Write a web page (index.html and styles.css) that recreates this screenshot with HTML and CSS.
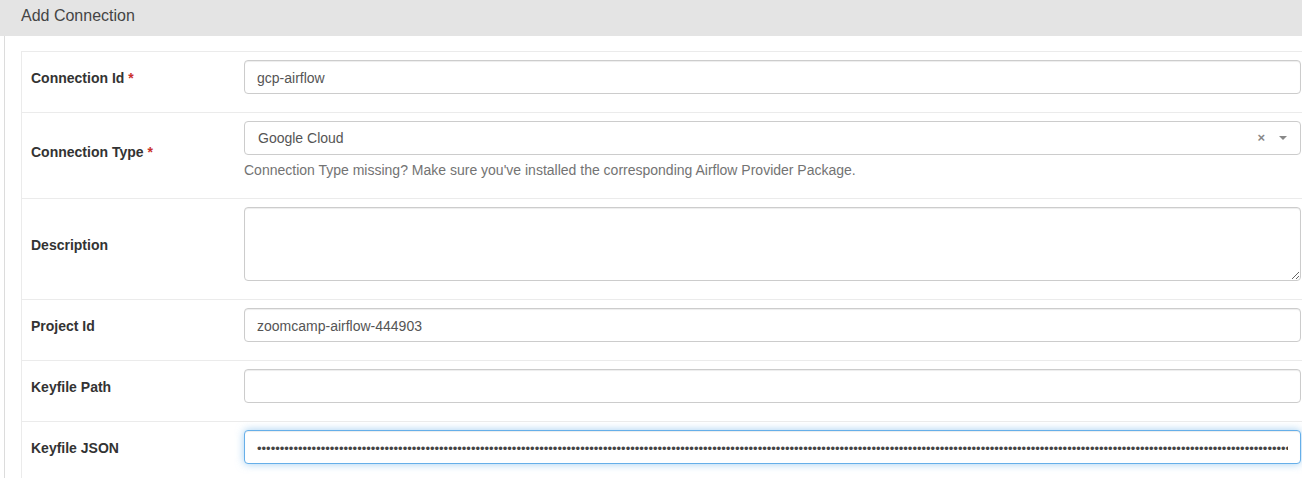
FILE: index.html
```html
<!DOCTYPE html>
<html>
<head>
<meta charset="utf-8">
<title>Add Connection</title>
<link rel="stylesheet" href="styles.css">
</head>
<body>
<div class="page">
  <div class="panel-heading">Add Connection</div>
  <div class="panel-body">
    <table class="form-table">
      <tr class="row-basic">
        <td class="label-cell"><label class="field-label">Connection Id <span class="req">*</span></label></td>
        <td class="field-cell"><input class="form-control" type="text" value="gcp-airflow"></td>
      </tr>
      <tr>
        <td class="label-cell"><label class="field-label">Connection Type <span class="req">*</span></label></td>
        <td class="field-cell">
          <div class="select2">
            <span class="select2-text">Google Cloud</span>
            <span class="select2-clear">×</span>
            <span class="select2-arrow"></span>
          </div>
          <p class="help-block">Connection Type missing? Make sure you've installed the corresponding Airflow Provider Package.</p>
        </td>
      </tr>
      <tr>
        <td class="label-cell"><label class="field-label">Description</label></td>
        <td class="field-cell"><textarea class="form-control textarea"></textarea></td>
      </tr>
      <tr>
        <td class="label-cell"><label class="field-label">Project Id</label></td>
        <td class="field-cell"><input class="form-control" type="text" value="zoomcamp-airflow-444903"></td>
      </tr>
      <tr>
        <td class="label-cell"><label class="field-label">Keyfile Path</label></td>
        <td class="field-cell"><input class="form-control" type="text" value=""></td>
      </tr>
      <tr>
        <td class="label-cell"><label class="field-label">Keyfile JSON</label></td>
        <td class="field-cell"><input class="form-control focused" type="password" value="xxxxxxxxxxxxxxxxxxxxxxxxxxxxxxxxxxxxxxxxxxxxxxxxxxxxxxxxxxxxxxxxxxxxxxxxxxxxxxxxxxxxxxxxxxxxxxxxxxxxxxxxxxxxxxxxxxxxxxxxxxxxxxxxxxxxxxxxxxxxxxxxxxxxxxxxxxxxxxxxxxxxxxxxxxxxxxxxxxxxxxxxxxxxxxxxxxxxxxxxxxxxxxxxxxxxxxxxxxxxxxxxxxx"></td>
      </tr>
    </table>
  </div>
</div>
</body>
</html>
```

FILE: styles.css
```css
html, body {
  margin: 0;
  padding: 0;
  background: #fff;
  overflow: hidden;
}

.page {
  width: 1302px;
  height: 478px;
  overflow: hidden;
  font-family: "Liberation Sans", Arial, sans-serif;
  font-size: 14px;
  color: #333;
}

.panel-heading {
  height: 36px;
  line-height: 32px;
  background: #e4e4e4;
  padding-left: 21px;
  font-size: 16px;
  color: #444;
}

.panel-body {
  margin-left: 4px;
  border-left: 1px solid #dcdcdc;
  padding: 15px 0 0 16px;
  height: 500px;
}

.form-table {
  border-collapse: collapse;
  width: 1289px;
  border: 1px solid #ebebeb;
}

.form-table td {
  border-top: 1px solid #ebebeb;
  border-bottom: 1px solid #ebebeb;
  padding: 8px;
  vertical-align: middle;
}

.label-cell {
  width: 197px;
  padding-left: 9px !important;
}

.field-label {
  display: inline-block;
  margin-bottom: 8px;
  font-weight: bold;
  font-size: 14px;
  line-height: 20px;
  color: #333;
}

.req {
  color: #c9302c;
  font-weight: bold;
}

.form-control {
  display: block;
  box-sizing: border-box;
  width: 100%;
  height: 34px;
  padding: 7px 12px 5px 12px;
  margin: 0 0 10px 0;
  font-family: "Liberation Sans", Arial, sans-serif;
  font-size: 14px;
  line-height: 20px;
  color: #555;
  background: #fff;
  border: 1px solid #ccc;
  border-radius: 4px;
  box-shadow: inset 0 1px 1px rgba(0, 0, 0, 0.075);
  outline: none;
}

.textarea {
  height: 74px;
  resize: vertical;
}

.focused {
  border-color: #66afe9;
  box-shadow: inset 0 1px 1px rgba(0, 0, 0, 0.075), 0 0 8px rgba(102, 175, 233, 0.6);
  font-size: 13px;
  color: #444;
}

.select2 {
  display: flex;
  align-items: center;
  box-sizing: border-box;
  height: 34px;
  padding: 0 12px 0 13px;
  border: 1px solid #ccc;
  border-radius: 4px;
  background: #fff;
  color: #555;
}

.select2-text {
  flex: 1;
  font-size: 14px;
  margin-top: -1px;
}

.select2-clear {
  color: #888;
  font-size: 13px;
  font-weight: bold;
  margin-right: 14px;
  margin-top: -1px;
}

.select2-arrow {
  width: 0;
  height: 0;
  border-left: 4px solid transparent;
  border-right: 4px solid transparent;
  border-top: 4px solid #888;
  margin-right: 1px;
  margin-top: -1px;
}

.help-block {
  margin: 5px 0 10px 0;
  font-size: 14px;
  line-height: 20px;
  color: #737373;
}
```
